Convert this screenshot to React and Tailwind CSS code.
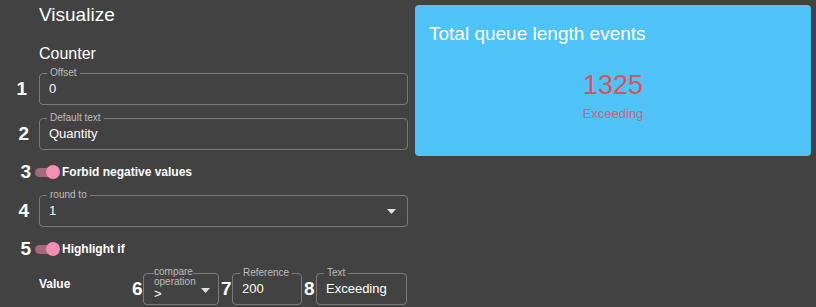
import React from "react";

function Field({ label, value, width, arrow }) {
  return (
    <div className={`relative h-[32px] rounded-[4px] border border-[#7a7a7a] ${width}`}>
      <span className="absolute left-[7px] top-[-7px] bg-[#424242] px-[3px] text-[10px] leading-[12px] text-[#bdbdbd]">
        {label}
      </span>
      <span className="absolute left-[9px] top-[7px] text-[13px] leading-[16px] text-white">{value}</span>
      {arrow && (
        <svg className="absolute right-[11px] top-[13px]" width="9" height="5" viewBox="0 0 9 5">
          <path d="M0 0 L9 0 L4.5 5 Z" fill="#e0e0e0" />
        </svg>
      )}
    </div>
  );
}

function Num({ n, cls }) {
  return (
    <span className={`text-[19px] font-bold leading-[20px] text-white ${cls}`}>{n}</span>
  );
}

function Toggle() {
  return (
    <div className="relative h-[14px] w-[24px]">
      <div className="absolute left-[0px] top-[3px] h-[9px] w-[20px] rounded-full bg-[#a7677c]" />
      <div className="absolute left-[11px] top-0 h-[14px] w-[14px] rounded-full bg-[#f48fb1]" />
    </div>
  );
}

export default function App() {
  return (
    <div
      className="flex h-[307px] w-[816px] bg-[#424242] text-white"
      style={{ fontFamily: '"Liberation Sans", Arial, sans-serif' }}
    >
      <div className="flex w-[415px] flex-col">
        <div className="pl-[39px] pt-[3px] text-[19px] leading-[24px]">Visualize</div>
        <div className="mt-[17px] pl-[39px] text-[16px] leading-[20px]">Counter</div>
        <div className="mt-[9px] flex items-center">
          <div className="flex w-[39px] justify-end pr-[12px]"><Num n="1" /></div>
          <Field label="Offset" value="0" width="w-[369px]" />
        </div>
        <div className="mt-[13px] flex items-center">
          <div className="flex w-[39px] justify-end pr-[10px]"><Num n="2" /></div>
          <Field label="Default text" value="Quantity" width="w-[369px]" />
        </div>
        <div className="mt-[14px] flex h-[16px] items-center">
          <div className="flex w-[35px] justify-end pr-[4px]"><Num n="3" /></div>
          <Toggle />
          <span className="ml-[3px] text-[12px] font-bold text-white">Forbid negative values</span>
        </div>
        <div className="mt-[15px] flex items-center">
          <div className="flex w-[39px] justify-end pr-[10px]"><Num n="4" /></div>
          <Field label="round to" value="1" width="w-[369px]" arrow />
        </div>
        <div className="mt-[14px] flex h-[16px] items-center">
          <div className="flex w-[35px] justify-end pr-[4px]"><Num n="5" /></div>
          <Toggle />
          <span className="ml-[3px] text-[12px] font-bold text-white">Highlight if</span>
        </div>
        <div className="mt-[16px] flex items-center">
          <div className="w-[132px] pl-[39px] pb-[10px] text-[12px] font-bold">Value</div>
          <Num n="6" cls="w-[11px]" />
          <div className="relative h-[32px] w-[76px] rounded-[4px] border border-[#7a7a7a]">
            <span className="absolute left-[7px] top-[-7px] w-[60px] px-[3px] text-[10px] leading-[10px] text-[#bdbdbd]">
              <span className="bg-[#424242]">compare</span><br />operation
            </span>
            <span className="absolute left-[10px] top-[12px] text-[13px] leading-[16px] text-white">&gt;</span>
            <svg className="absolute right-[8px] top-[14px]" width="9" height="5" viewBox="0 0 9 5">
              <path d="M0 0 L9 0 L4.5 5 Z" fill="#e0e0e0" />
            </svg>
          </div>
          <Num n="7" cls="ml-[2px] w-[11px]" />
          <Field label="Reference" value="200" width="w-[70px]" />
          <Num n="8" cls="ml-[2px] w-[12px]" />
          <Field label="Text" value="Exceeding" width="w-[91px]" />
        </div>
      </div>
      <div className="mt-[5px] flex h-[151px] w-[396px] flex-col rounded-[4px] bg-[#4fc3f7]">
        <div className="pl-[14px] pt-[18px] text-[19px] leading-[22px] text-white">Total queue length events</div>
        <div className="mt-[25px] text-center text-[27px] leading-[30px] text-[#d4555f]">1325</div>
        <div className="mt-[6px] text-center text-[13px] leading-[16px] text-[#d4607a]">Exceeding</div>
      </div>
    </div>
  );
}
